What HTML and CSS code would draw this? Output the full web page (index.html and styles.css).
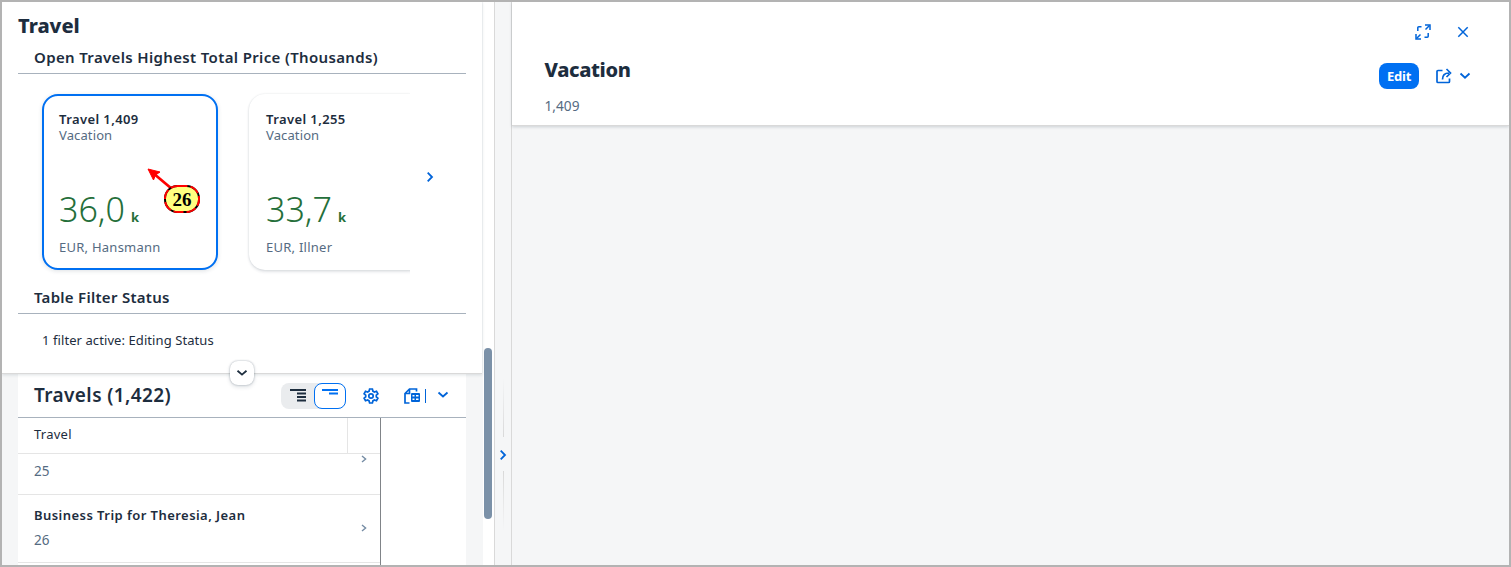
FILE: index.html
```html
<!DOCTYPE html>
<html lang="en">
<head>
<meta charset="utf-8">
<title>Travel</title>
<link rel="stylesheet" href="styles.css">
</head>
<body>
<div class="frame">
  <main class="list-page">
    <header class="page-header">
      <h1 class="page-title">Travel</h1>
      <h2 class="section-title">Open Travels Highest Total Price (Thousands)</h2>
      <div class="carousel">
        <div class="cards">
          <article class="card selected">
            <div class="card-title">Travel 1,409</div>
            <div class="card-sub">Vacation</div>
            <div class="card-value"><span class="num">36,0</span><span class="unit">k</span></div>
            <div class="card-foot">EUR, Hansmann</div>
          </article>
          <article class="card">
            <div class="card-title">Travel 1,255</div>
            <div class="card-sub">Vacation</div>
            <div class="card-value"><span class="num">33,7</span><span class="unit">k</span></div>
            <div class="card-foot">EUR, Illner</div>
          </article>
        </div>
        <svg class="next" width="8" height="12" viewBox="0 0 8 12"><path d="M1.7 1.7 6 6 1.7 10.3"/></svg>
      </div>
      <h2 class="section-title second">Table Filter Status</h2>
      <p class="filter-text">1 filter active: Editing Status</p>
      <button class="collapse"><svg width="12" height="8" viewBox="0 0 12 8"><path d="M1.5 1.7 6 5.6 10.5 1.7"/></svg></button>
    </header>
    <section class="table-area">
      <div class="toolbar">
        <h2 class="table-title">Travels (1,422)</h2>
        <div class="segmented">
          <span class="seg"><svg width="16" height="14" viewBox="0 0 16 14"><path d="M0 1h16M7 4.500h9M7 8h9M7 11.500h9"/></svg></span>
          <span class="seg on"><svg width="16" height="14" viewBox="0 0 16 14"><path d="M0 1h16M7 4.500h9"/></svg></span>
        </div>
        <svg class="gear" width="16" height="16" viewBox="0 0 16 16"><path d="M6.600 1h2.800l.5 2.100 1.500.9 2.100-.7 1.400 2.500-1.600 1.400v1.600l1.600 1.400-1.400 2.500-2.100-.7-1.500.9-.5 2.100H6.600l-.5-2.100-1.500-.9-2.100.7-1.400-2.500 1.600-1.400V7.200L1.100 5.800l1.400-2.500 2.100.7 1.500-.9z"/><circle cx="8" cy="8" r="2.200"/></svg>
        <svg class="export" width="16" height="16" viewBox="0 0 16 16"><path d="M12.500 3.500V1H5.500L1 5.500V15h4.500M5.500 1v4.500H1"/><path class="solid" fill-rule="evenodd" d="M8 5h7a1 1 0 0 1 1 1v7a1 1 0 0 1-1 1H8a1 1 0 0 1-1-1V6a1 1 0 0 1 1-1zM8.500 7v1.500h2V7zM12 7v1.500h2.500V7zM8.500 10.500V12h2v-1.500zM12 10.500V12h2.500v-1.500z"/></svg>
        <i class="divider"></i>
        <svg class="more" width="12" height="8" viewBox="0 0 12 8"><path d="M1.500 1.500 6 5.500 10.500 1.500"/></svg>
      </div>
      <div class="table">
        <div class="grid">
          <div class="head-row"><span class="head-cell">Travel</span></div>
          <div class="row first"><span class="row-sub">25</span><svg class="nav" width="6" height="8" viewBox="0 0 6 8"><path d="M1 1l3.600 3L1 7"/></svg></div>
          <div class="row"><div><div class="row-title">Business Trip for Theresia, Jean</div><div class="row-sub">26</div></div><svg class="nav" width="6" height="8" viewBox="0 0 6 8"><path d="M1 1l3.600 3L1 7"/></svg></div>
        </div>
      </div>
    </section>
  </main>
  <div class="scrollbar"><div class="thumb"></div></div>
  <div class="splitter">
    <i class="grip up"></i>
    <svg width="8" height="12" viewBox="0 0 8 12"><path d="M1.700 1.700 6 6 1.700 10.300"/></svg>
    <i class="grip down"></i>
  </div>
  <section class="detail">
    <header class="detail-header">
      <div class="detail-text">
        <h2 class="detail-title">Vacation</h2>
        <div class="detail-sub">1,409</div>
      </div>
      <div class="detail-tools">
        <div class="window-actions">
          <svg width="16" height="16" viewBox="0 0 16 16"><path d="M2.800 7V3.800a1 1 0 0 1 1-1H6.500M13.200 9v3.200a1 1 0 0 1-1 1H9.500M10.500 5.500l4-4M5.500 10.500l-4 4"/><path d="M10 1h5v5M1 10v5h5"/></svg>
          <svg width="12" height="12" viewBox="0 0 12 12"><path d="M1.300 1.300l9.400 9.400M10.700 1.300l-9.400 9.400"/></svg>
        </div>
        <div class="object-actions">
          <button class="edit">Edit</button>
          <svg class="share" width="16" height="16" viewBox="0 0 16 16"><path d="M6.500 2.500H2a1 1 0 0 0-1 1v10a1 1 0 0 0 1 1h10.500a1 1 0 0 0 1-1v-3M6.500 11.500C6.500 7.500 8.500 5 13 5M10.500 1 14.500 5l-4 4"/></svg>
          <svg width="12" height="8" viewBox="0 0 12 8"><path d="M1.500 1.500 6 5.700 10.500 1.500"/></svg>
        </div>
      </div>
    </header>
  </section>
  <svg class="callout" width="60" height="52" viewBox="0 0 60 52">
    <path d="M28 25 9 9" stroke="#f00" stroke-width="2.800"/>
    <path d="M4 5 16 8 11.500 11 9.500 16z" fill="#f00" stroke="#f00" stroke-width="1"/>
    <rect x="21" y="22" width="34" height="26" rx="12.500" fill="#ffff80" stroke="#000" stroke-width="2"/>
    <rect x="21" y="22" width="34" height="26" rx="12.500" stroke="#f00" stroke-width="2" stroke-dasharray="10 3"/>
    <text x="38" y="42" text-anchor="middle">26</text>
  </svg>
</div>
</body>
</html>
```
FILE: styles.css
```css
* { box-sizing: border-box; }
body { margin: 0; font: 14px/20px "Noto Sans", sans-serif; color: #1d2d3e; }
h1, h2, p { margin: 0; }
svg { display: block; fill: none; stroke: #0064d9; stroke-width: 1.8; flex: none; }
button { padding: 0; }
.frame { position: relative; display: flex; width: 1511px; height: 567px; border: 2px solid #b3b3b3; background: #f5f6f7; overflow: hidden; white-space: nowrap; }
.list-page { width: 480px; flex: none; display: flex; flex-direction: column; }
.page-header { position: relative; z-index: 1; height: 372px; flex: none; padding: 9px 16px 0; background: #fff; border-bottom: 1px solid #d9d9d9; box-shadow: 0 1px 3px #22354826; }
.page-title { height: 30px; font-size: 20px; line-height: 30px; font-weight: 800; }
.section-title { height: 31px; padding-left: 16px; font-size: 15px; line-height: 29px; font-weight: 600; letter-spacing: .35px; border-bottom: 1px solid #a8b2bd; margin-top: 2px; }
.carousel { display: flex; align-items: center; height: 208px; }
.cards { display: flex; gap: 31px; width: 392px; height: 200px; padding: 16px 0 8px 24px; overflow: hidden; }
.card { width: 176px; height: 176px; flex: none; padding: 17px; border-radius: 16px; background: #fff; box-shadow: 0 0 2px #22354826, 0 2px 3px #2235481f; }
.card.selected { padding: 15px; border: 2px solid #0070f2; box-shadow: 0 1px 4px #22354826; }
.card-title { height: 16px; font-size: 13px; line-height: 17px; font-weight: 600; letter-spacing: .4px; }
.card-sub { height: 16px; font-size: 13px; line-height: 17px; letter-spacing: .12px; color: #556b82; }
.card-value { display: flex; align-items: baseline; height: 56px; margin-top: 40px; line-height: 53px; color: #256f3a; }
.num { width: 72px; font-size: 34px; font-weight: 300; }
.unit { font-size: 13px; font-weight: 700; }
.card-foot { margin-top: -2px; font-size: 13px; letter-spacing: .25px; color: #556b82; }
.next { margin: -2px 0 0 16px; }
.section-title.second { margin-top: 1px; letter-spacing: .28px; }
.filter-text { padding: 16px 0 0 24px; font-size: 13px; letter-spacing: .08px; }
.collapse { position: absolute; left: 228px; bottom: -12px; width: 24px; height: 24px; display: grid; place-items: center; border: 0; border-radius: 8px; background: #fff; box-shadow: 0 0 2px #22354866, 0 2px 4px #22354826; }
.collapse svg { stroke: #1d2d3e; }
.table-area { flex: 1; min-height: 0; display: flex; flex-direction: column; margin: 0 16px; background: #fff; }
.toolbar { display: flex; align-items: center; height: 44px; flex: none; padding: 0 0 0 16px; border-bottom: 1px solid #a8b2bd; }
.table-title { width: 247px; height: 43px; flex: none; font-size: 19px; font-weight: 600; line-height: 43px; letter-spacing: .4px; }
.segmented { display: flex; width: 65px; height: 26px; flex: none; border-radius: 8px; background: #eaecee; }
.seg { display: grid; place-items: center; width: 33px; height: 26px; border-radius: 8px; }
.seg svg { stroke: #1d2d3e; }
.seg.on { width: 32px; background: #fff; border: 1px solid #0070f2; }
.seg.on svg { stroke: #0070f2; }
.gear { margin-left: 16.5px; stroke-width: 1.7; }
.export { margin-left: 25px; stroke-width: 1.7; }
.solid { fill: #0064d9; stroke: none; }
.divider { width: 1px; height: 14px; margin-left: 5px; background: #0064d9; }
.more { margin: -2px 0 0 11px; }
.table { flex: 1; min-height: 0; overflow: hidden; }
.grid { width: 363px; height: 148px; border-right: 1px solid #808488; }
.head-row { height: 36px; border-bottom: 1px solid #e5e5e5; }
.head-cell { display: block; width: 330px; height: 35px; padding-left: 16px; font-size: 13px; line-height: 32px; letter-spacing: .25px; border-right: 1px solid #e5e5e5; }
.row { display: flex; justify-content: space-between; align-items: center; height: 68px; padding: 0 13px 2px 16px; border-bottom: 1px solid #e5e5e5; }
.row.first { height: 41px; align-items: flex-start; padding-top: 1px; }
.first .row-sub { line-height: 32px; }
.row-title { height: 25px; font-size: 13px; line-height: 20px; font-weight: 600; letter-spacing: .45px; }
.row-sub { font-size: 13.5px; line-height: 20px; color: #556b82; }
.nav { stroke: #758ca4; stroke-width: 1.4; }
.scrollbar { width: 12px; flex: none; padding: 346px 1px 0; background: #fff; border-left: 1px solid #f5f6f7; }
.thumb { width: 8px; height: 171px; border-radius: 4px; background: #7b91a8; }
.splitter { width: 18px; flex: none; display: flex; flex-direction: column; align-items: center; border: solid #d9d9d9; border-width: 0 1px; padding-top: 375px; }
.grip { width: 1px; height: 60px; }
.splitter svg { margin: 12px 0 10px; }
.up { background: linear-gradient(#d9d9d900, #d9d9d9); }
.down { background: linear-gradient(#d9d9d9, #d9d9d900); }
.detail { flex: 1; }
.detail-header { display: flex; justify-content: space-between; height: 124px; padding: 0 38px 0 32px; background: #fff; border-bottom: 1px solid #d9d9d9; box-shadow: 0 1px 3px #22354833; }
.detail-title { margin-top: 53px; padding-left: .5px; font-size: 20px; line-height: 30px; font-weight: 800; letter-spacing: -.35px; }
.detail-sub { margin-top: 11px; padding-left: .5px; font-size: 13.7px; color: #556b82; }
.window-actions { display: flex; align-items: center; justify-content: flex-end; gap: 26px; height: 60px; padding-right: 2px; }
.window-actions svg { stroke-width: 1.5; }
.object-actions { display: flex; align-items: center; justify-content: flex-end; height: 28px; }
.edit { width: 40px; height: 26px; border: 0; border-radius: 8px; background: #0070f2; color: #fff; font: 700 13px/26px "Noto Sans", sans-serif; letter-spacing: -.2px; }
.share { margin: 0 7px 0 17px; stroke-width: 1.7; }
.callout { position: absolute; z-index: 2; left: 142px; top: 162px; }
.callout text { fill: #000; stroke: none; font: bold 19px "Liberation Serif", serif; }
```
